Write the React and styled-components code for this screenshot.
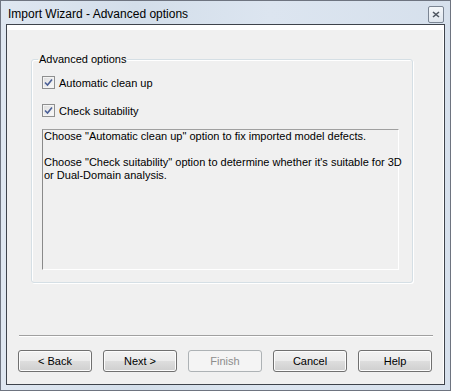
import styled, { createGlobalStyle } from "styled-components";

const GlobalStyle = createGlobalStyle`
  html, body {
    margin: 0;
    padding: 0;
    background: #ffffff;
  }
  body {
    font-family: "Liberation Sans", Arial, sans-serif;
  }
`;

const Window = styled.div`
  width: 451px;
  height: 391px;
  box-sizing: border-box;
  border: 1px solid #6e7480;
  background: linear-gradient(90deg, #dfe7f1 0%, #d3deea 30%, #dce5f0 60%, #d6e0ec 100%);
  padding: 0 5px 5px 5px;
  display: flex;
  flex-direction: column;
`;

const TitleBar = styled.div`
  height: 23px;
  display: flex;
  align-items: center;
  justify-content: space-between;
  padding-left: 2px;
  padding-right: 1px;
`;

const Title = styled.span`
  font-size: 12px;
  color: #000;
  margin-top: 2px;
`;

const CloseButton = styled.div`
  width: 14px;
  height: 15px;
  margin-top: 3px;
  border: 1px solid #7b8593;
  border-radius: 2px;
  background: linear-gradient(#f4f7fa, #dfe6ee);
  display: flex;
  align-items: center;
  justify-content: center;
`;

const Client = styled.div`
  flex: 1;
  border: 1px solid #3e434b;
  background: #f0f0f0;
  display: flex;
  flex-direction: column;
`;

const Body = styled.div`
  flex: 1;
  border-top: 5px solid #ffffff;
  border-right: 1px solid #ffffff;
  display: flex;
  flex-direction: column;
  padding: 23px 0 12px 0;
`;

const Group = styled.fieldset`
  margin: 0 0 0 24px;
  width: 382px;
  height: 230px;
  box-sizing: border-box;
  padding: 10px 0 0 10px;
  border: 1px solid #d5dfe5;
  border-radius: 3px;
  box-shadow: inset 1px 1px 0 #ffffff, 1px 1px 0 #ffffff;
  display: flex;
  flex-direction: column;
  gap: 15px;
`;

const Legend = styled.legend`
  font-size: 11px;
  line-height: 13px;
  color: #000;
  padding: 0 1px;
  margin-left: -4px;
`;

const CheckRow = styled.label`
  display: flex;
  align-items: center;
  gap: 4px;
  height: 13px;
  font-size: 11px;
  color: #000;
`;

const Box = styled.span`
  width: 11px;
  height: 11px;
  border: 1px solid #8e8f8f;
  background: linear-gradient(135deg, #dcdcdc, #fbfbfb);
  box-shadow: inset 0 0 0 1px #f4f4f4;
  display: flex;
  align-items: center;
  justify-content: center;
`;

const InfoBox = styled.div`
  width: 357px;
  height: 141px;
  box-sizing: border-box;
  margin-top: -3px;
  border: 1px solid;
  border-color: #a0a0a0 #ffffff #ffffff #8a8a8a;
  padding: 0 0 0 1px;
  font-size: 11px;
  line-height: 13px;
  color: #000;
  white-space: nowrap;
`;

const Para = styled.p`
  margin: 0 0 13px 0;
`;

const Spacer = styled.div`
  flex: 1;
`;

const Separator = styled.div`
  height: 0;
  margin: 0 10px 13px 12px;
  border-top: 1px solid #a0a0a0;
  border-bottom: 1px solid #ffffff;
`;

const ButtonRow = styled.div`
  display: flex;
  gap: 11px;
  padding-left: 11px;
`;

const Button = styled.button`
  width: 74px;
  height: 22px;
  box-sizing: border-box;
  padding: 0;
  font-family: "Liberation Sans", Arial, sans-serif;
  font-size: 11px;
  color: ${(p) => (p.disabled ? "#8d8d8d" : "#000")};
  border: 1px solid ${(p) => (p.disabled ? "#adb2b5" : "#707070")};
  border-radius: 3px;
  background: ${(p) =>
    p.disabled
      ? "#f4f4f4"
      : "linear-gradient(#f2f2f2 0%, #ebebeb 48%, #dddddd 52%, #cfcfcf 100%)"};
  box-shadow: inset 0 0 0 1px ${(p) => (p.disabled ? "#f4f4f4" : "#fcfcfc")};
`;

const Check = () => (
  <Box>
    <svg width="9" height="9" viewBox="0 0 9 9">
      <path d="M1 4.5 L3.5 7 L8 1.5" fill="none" stroke="#4a5f97" strokeWidth="1.6" />
    </svg>
  </Box>
);

export default function App() {
  return (
    <>
      <GlobalStyle />
      <Window>
        <TitleBar>
          <Title>Import Wizard - Advanced options</Title>
          <CloseButton>
            <svg width="8" height="7" viewBox="0 0 8 7">
              <path d="M1 1 L7 6 M7 1 L1 6" stroke="#4d5560" strokeWidth="1.6" />
            </svg>
          </CloseButton>
        </TitleBar>
        <Client>
          <Body>
            <Group>
              <Legend>Advanced options</Legend>
              <CheckRow>
                <Check />
                Automatic clean up
              </CheckRow>
              <CheckRow>
                <Check />
                Check suitability
              </CheckRow>
              <InfoBox>
                <Para>Choose "Automatic clean up" option to fix imported model defects.</Para>
                <Para>
                  Choose "Check suitability" option to determine whether it's suitable for 3D
                  <br />
                  or Dual-Domain analysis.
                </Para>
              </InfoBox>
            </Group>
            <Spacer />
            <Separator />
            <ButtonRow>
              <Button>&lt; Back</Button>
              <Button>Next &gt;</Button>
              <Button disabled>Finish</Button>
              <Button>Cancel</Button>
              <Button>Help</Button>
            </ButtonRow>
          </Body>
        </Client>
      </Window>
    </>
  );
}
